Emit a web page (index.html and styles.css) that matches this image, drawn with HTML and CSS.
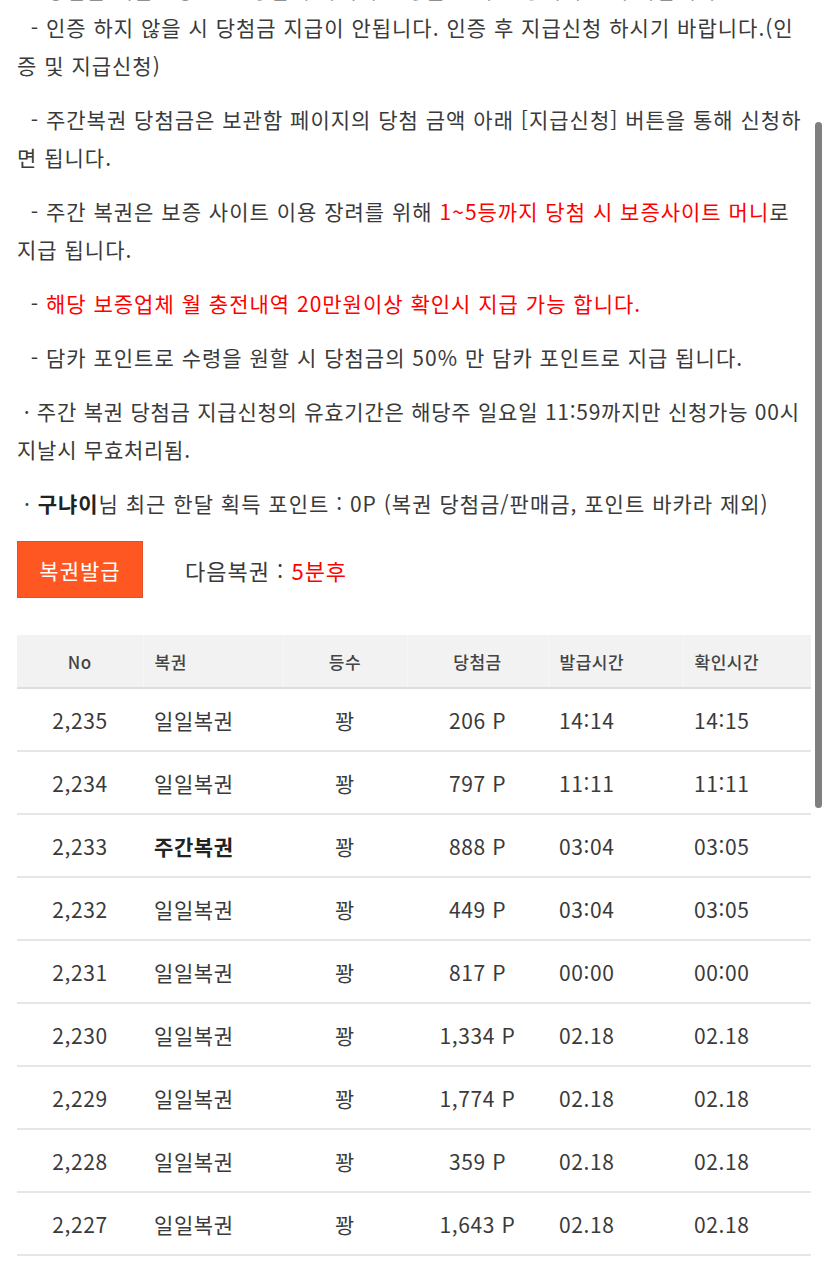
FILE: index.html
```html
<!DOCTYPE html>
<html lang="ko">
<head>
<meta charset="utf-8">
<title>복권</title>
<link rel="stylesheet" href="styles.css">
</head>
<body>
<div class="page">
  <div class="notice">
    <p class="cut">&nbsp;&nbsp;- 당첨금 지급신청 전 보증업체 아이디 인증을 먼저 진행해 주시기 바랍니다.</p>
    <p>&nbsp;&nbsp;- 인증 하지 않을 시 당첨금 지급이 안됩니다. 인증 후 지급신청 하시기 바랍니다.(인증 및 지급신청)</p>
    <p>&nbsp;&nbsp;- 주간복권 당첨금은 보관함 페이지의 당첨 금액 아래 [지급신청] 버튼을 통해 신청하면 됩니다.</p>
    <p>&nbsp;&nbsp;- 주간 복권은 보증 사이트 이용 장려를 위해 <span class="red">1~5등까지 당첨 시 보증사이트 머니</span>로 지급 됩니다.</p>
    <p>&nbsp;&nbsp;- <span class="red">해당 보증업체 월 충전내역 20만원이상 확인시 지급 가능 합니다.</span></p>
    <p>&nbsp;&nbsp;- 담카 포인트로 수령을 원할 시 당첨금의 50% 만 담카 포인트로 지급 됩니다.</p>
    <p class="tight">&nbsp;· 주간 복권 당첨금 지급신청의 유효기간은 해당주 일요일 11:59까지만 신청가능 00시 지날시 무효처리됨.</p>
    <p>&nbsp;· <b>구냐이</b>님 최근 한달 획득 포인트 : 0P (복권 당첨금/판매금, 포인트 바카라 제외)</p>
  </div>

  <div class="issue">
    <button class="issue-btn" type="button">복권발급</button>
    <span class="next">다음복권 : <span class="red">5분후</span></span>
  </div>

  <table class="list">
    <colgroup>
      <col class="c-no"><col class="c-type"><col class="c-rank"><col class="c-prize"><col class="c-issue"><col class="c-check">
    </colgroup>
    <thead>
      <tr>
        <th class="center">No</th>
        <th class="left">복권</th>
        <th class="center">등수</th>
        <th class="center">당첨금</th>
        <th class="left">발급시간</th>
        <th class="left">확인시간</th>
      </tr>
    </thead>
    <tbody>
      <tr><td class="center">2,235</td><td class="left">일일복권</td><td class="center">꽝</td><td class="center">206 P</td><td class="left">14:14</td><td class="left">14:15</td></tr>
      <tr><td class="center">2,234</td><td class="left">일일복권</td><td class="center">꽝</td><td class="center">797 P</td><td class="left">11:11</td><td class="left">11:11</td></tr>
      <tr><td class="center">2,233</td><td class="left"><b>주간복권</b></td><td class="center">꽝</td><td class="center">888 P</td><td class="left">03:04</td><td class="left">03:05</td></tr>
      <tr><td class="center">2,232</td><td class="left">일일복권</td><td class="center">꽝</td><td class="center">449 P</td><td class="left">03:04</td><td class="left">03:05</td></tr>
      <tr><td class="center">2,231</td><td class="left">일일복권</td><td class="center">꽝</td><td class="center">817 P</td><td class="left">00:00</td><td class="left">00:00</td></tr>
      <tr><td class="center">2,230</td><td class="left">일일복권</td><td class="center">꽝</td><td class="center">1,334 P</td><td class="left">02.18</td><td class="left">02.18</td></tr>
      <tr><td class="center">2,229</td><td class="left">일일복권</td><td class="center">꽝</td><td class="center">1,774 P</td><td class="left">02.18</td><td class="left">02.18</td></tr>
      <tr><td class="center">2,228</td><td class="left">일일복권</td><td class="center">꽝</td><td class="center">359 P</td><td class="left">02.18</td><td class="left">02.18</td></tr>
      <tr><td class="center">2,227</td><td class="left">일일복권</td><td class="center">꽝</td><td class="center">1,643 P</td><td class="left">02.18</td><td class="left">02.18</td></tr>
    </tbody>
  </table>
</div>
<div class="scrollbar"></div>
</body>
</html>
```

FILE: styles.css
```css
html, body {
  margin: 0;
  padding: 0;
  background: #ffffff;
}
body {
  font-family: "Noto Sans CJK KR", "Noto Sans", sans-serif;
  color: #3a3a3a;
  overflow: hidden;
  height: 1264px;
}
.page {
  padding: 0 17px;
  margin-top: -30px;
}
.notice p {
  margin: 0 0 16px;
  font-size: 21px;
  line-height: 38px;
  letter-spacing: 1px;
}
.notice p.tight {
  letter-spacing: 0.75px;
}
.notice p.cut {
  margin-bottom: 0;
  white-space: nowrap;
  overflow: hidden;
}
.notice b {
  font-weight: 700;
  color: #222;
}
.red {
  color: #ff0000;
}
.issue {
  display: flex;
  align-items: center;
  gap: 42px;
  margin-top: 19px;
}
.issue-btn {
  width: 126px;
  height: 57px;
  background: #ff5722;
  border: 1px solid #e2502a;
  color: #ffffff;
  font-family: inherit;
  font-size: 21px;
  letter-spacing: 1px;
  padding: 0;
  cursor: pointer;
}
.next {
  font-size: 22px;
  letter-spacing: 1px;
}
.list {
  width: 794px;
  margin-top: 37px;
  border-collapse: collapse;
  table-layout: fixed;
}
.c-no { width: 126px; }
.c-type { width: 140px; }
.c-rank { width: 124px; }
.c-prize { width: 141px; }
.c-issue { width: 135px; }
.c-check { width: 128px; }
.list th {
  background: #f2f2f2;
  height: 52px;
  padding: 0;
  font-size: 17px;
  font-weight: 500;
  letter-spacing: 0.5px;
  color: #444;
  border-bottom: 2px solid #dedede;
  border-left: 1px solid #f7f7f7;
}
.list th:first-child {
  border-left: none;
}
.list td {
  height: 61px;
  padding: 0;
  font-size: 21px;
  letter-spacing: 0.6px;
  color: #3a3a3a;
  border-bottom: 2px solid #e6e6e6;
}
.list td b {
  font-weight: 700;
  color: #222;
}
.center { text-align: center; }
.list th.left, .list td.left { text-align: left; padding-left: 11px; }
.scrollbar {
  position: absolute;
  left: 815px;
  top: 122px;
  width: 7px;
  height: 686px;
  border-radius: 4px;
  background: #7f7f7f;
}
```
